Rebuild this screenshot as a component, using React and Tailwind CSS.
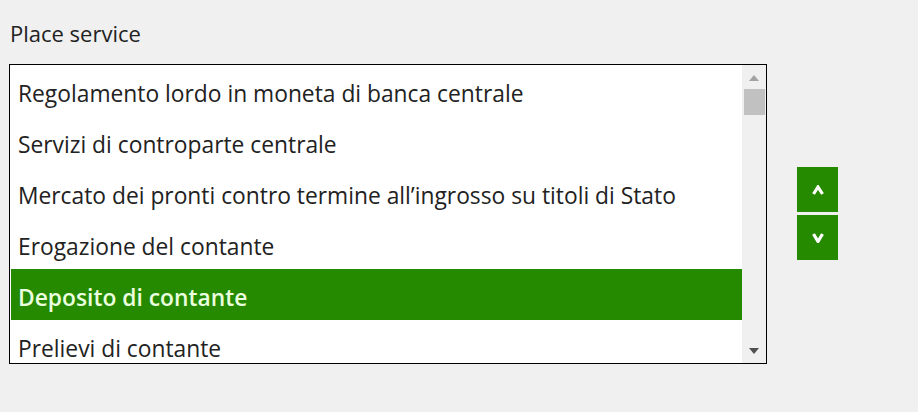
const items = [
  "Regolamento lordo in moneta di banca centrale",
  "Servizi di controparte centrale",
  "Mercato dei pronti contro termine all\u2019ingrosso su titoli di Stato",
  "Erogazione del contante",
  "Deposito di contante",
  "Prelievi di contante",
];

export default function App() {
  const selected = 4;
  return (
    <div className="w-[918px] h-[412px] bg-[#f0f0f0] font-['Open_Sans',sans-serif] text-[#222]">
      <div className="pl-[10px] pt-[19px] text-[22px] leading-[28px]">Place service</div>
      <div className="flex items-start mt-[17px] pl-[9px]">
        <div className="flex w-[758px] h-[300px] border border-black bg-white">
          <div className="flex-1 pl-[1px] overflow-hidden">
            {items.map((t, i) => (
              <div
                key={i}
                className={
                  i === selected
                    ? "h-[51px] flex items-center pl-[7px] pt-[7px] text-[22.8px] whitespace-nowrap bg-[#268a00] text-[#eaffdf] font-semibold"
                    : "h-[51px] flex items-center pl-[7px] pt-[7px] text-[22.8px] whitespace-nowrap"
                }
              >
                {t}
              </div>
            ))}
          </div>
          <div className="w-[24px] flex flex-col items-center bg-[#f0f0f0] pt-[10px] pb-[9px]">
            <svg width="10" height="6" viewBox="0 0 10 6">
              <path d="M0 6 L5 0 L10 6 Z" fill="#a3a3a3" />
            </svg>
            <div className="w-[21px] h-[26px] bg-[#c1c1c1] mt-[8px]" />
            <div className="flex-1" />
            <svg width="10" height="6" viewBox="0 0 10 6">
              <path d="M0 0 L5 6 L10 0 Z" fill="#505050" />
            </svg>
          </div>
        </div>
        <div className="flex flex-col gap-[3px] ml-[30px] mt-[103px]">
          <button className="w-[41px] h-[45px] bg-[#268a00] flex items-center justify-center">
            <svg width="12" height="10" viewBox="0 0 12 10">
              <path d="M1.5 9 L6 2 L10.5 9" fill="none" stroke="#fff" strokeWidth="3.2" />
            </svg>
          </button>
          <button className="w-[41px] h-[45px] bg-[#268a00] flex items-center justify-center">
            <svg width="12" height="10" viewBox="0 0 12 10">
              <path d="M1.5 1 L6 8.5 L10.5 1" fill="none" stroke="#fff" strokeWidth="3.2" />
            </svg>
          </button>
        </div>
      </div>
    </div>
  );
}
